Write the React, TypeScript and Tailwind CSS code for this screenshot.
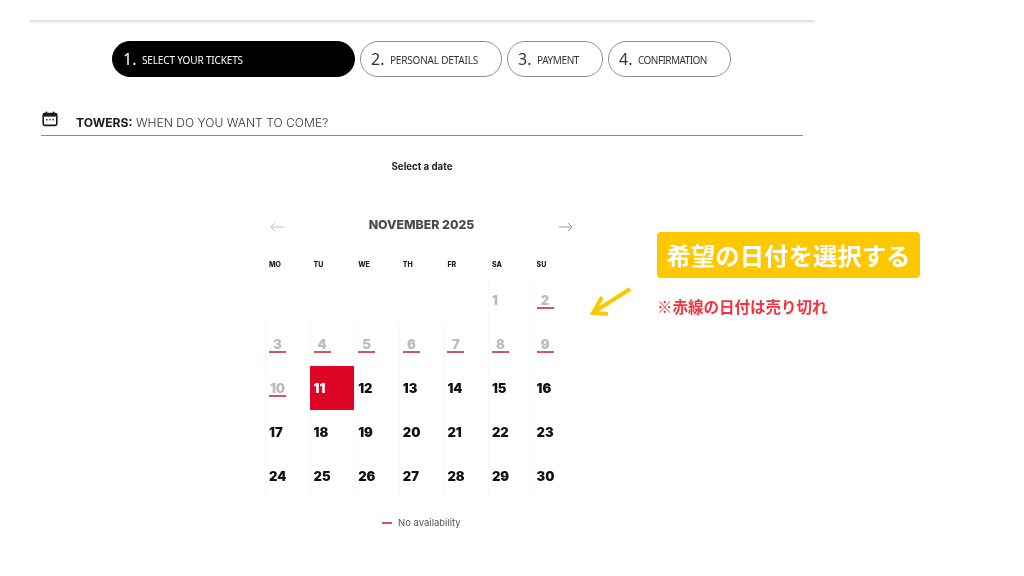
const steps = [
  { n: "1.", label: "SELECT YOUR TICKETS", w: "w-[243px]", t: "tracking-[-0.15px]", active: true },
  { n: "2.", label: "PERSONAL DETAILS", w: "w-[142px]", t: "tracking-[-0.2px]", active: false },
  { n: "3.", label: "PAYMENT", w: "w-[96px]", t: "tracking-[-0.4px]", active: false },
  { n: "4.", label: "CONFIRMATION", w: "w-[123px]", t: "tracking-[-0.55px]", active: false },
];
const days = ["MO", "TU", "WE", "TH", "FR", "SA", "SU"];
const sold = [2, 3, 4, 5, 6, 7, 8, 9, 10];

function Cell({ d }: { d: number | null }) {
  if (d === null) return <div className="h-[44px]" />;
  const selected = d === 11;
  const grey = d <= 10;
  const isSold = sold.includes(d);
  return (
    <div
      className={`relative h-[44px] border-l border-[#f8f8f8] ${selected ? "bg-[#df0527] text-white border-l-[#df0527]" : grey ? "text-[#bcbcbc]" : "text-[#111]"}`}
    >
      {isSold ? (
        <span className="absolute left-[3px] top-[14px] w-[17px] text-center text-[13px] leading-[17px] font-black">{d}</span>
      ) : (
        <span className="absolute left-[3px] top-[14px] text-[13px] leading-[17px] font-black">{d}</span>
      )}
      {isSold && <span className="absolute left-[3px] top-[29px] h-[2px] w-[17px] bg-[#d4565f]" />}
    </div>
  );
}

export default function App() {
  const cells: (number | null)[] = [null, null, null, null, null];
  for (let i = 1; i <= 30; i++) cells.push(i);
  return (
    <div className="h-[576px] w-[1024px] overflow-hidden bg-white font-['Inter',sans-serif] blur-[0.3px]">
      <div className="h-[20px]" />
      <div className="ml-[30px] h-[2px] w-[785px] bg-[#e2e2e2] shadow-[0_1px_2px_rgba(0,0,0,0.05)]" />
      <div className="ml-[112px] mt-[19px] flex gap-[5px] font-['Noto_Sans',sans-serif]">
        {steps.map((s) => (
          <div
            key={s.n}
            className={`flex h-[36px] items-center rounded-full border pl-[10px] ${s.w} ${s.active ? "border-black bg-black text-white" : "border-[#8e8e8e] bg-white text-[#333]"}`}
          >
            <span className="w-[19px] text-[16px] leading-none">{s.n}</span>
            <span className={`whitespace-nowrap pt-[1px] text-[10px] leading-none ${s.t}`}>{s.label}</span>
          </div>
        ))}
      </div>
      <div className="relative ml-[41px] mt-[34px] flex h-[25px] w-[762px] items-start border-b border-[#8a8a8a] pl-[35px]">
        <svg className="absolute left-[1px] top-[0px]" width="16" height="16" viewBox="0 0 16 16" fill="none">
          <rect x="1.2" y="2.6" width="13.6" height="11.8" rx="1.6" stroke="#1a1a1a" strokeWidth="1.6" />
          <rect x="1.2" y="2.6" width="13.6" height="3" fill="#1a1a1a" />
          <rect x="3.6" y="0.6" width="1.6" height="3" fill="#1a1a1a" />
          <rect x="10.8" y="0.6" width="1.6" height="3" fill="#1a1a1a" />
          <rect x="4" y="8" width="1.4" height="1.4" fill="#1a1a1a" />
          <rect x="7.2" y="8" width="1.4" height="1.4" fill="#1a1a1a" />
          <rect x="10.4" y="8" width="1.4" height="1.4" fill="#1a1a1a" />
        </svg>
        <p className="mt-[4px] whitespace-nowrap text-[12.1px] leading-[16px] font-light text-[#333]">
          <span className="font-bold text-[#1a1a1a]">TOWERS:</span> WHEN DO YOU WANT TO COME?
        </p>
      </div>
      <p className="mt-[24px] w-[844px] text-center text-[9.7px] leading-[14px] font-bold text-[#222]">Select a date</p>
      <div className="ml-[265px] mt-[43px] flex">
        <div className="w-[312px]">
          <div className="relative h-[16px] w-full">
            <p className="w-[312px] pl-[1px] text-center text-[12.3px] leading-[16px] font-extrabold text-[#4a4a4a]">NOVEMBER 2025</p>
            <svg className="absolute left-[5px] top-[5px]" width="15" height="10" viewBox="0 0 15 10" fill="none" stroke="#bcbcbc" strokeWidth="1">
              <path d="M14 5H1M5 1L1 5l4 4" />
            </svg>
            <svg className="absolute left-[293px] top-[5px]" width="15" height="10" viewBox="0 0 15 10" fill="none" stroke="#9a9a9a" strokeWidth="1">
              <path d="M1 5h13M10 1l4 4-4 4" />
            </svg>
          </div>
          <div className="mt-[25px] grid h-[20px] grid-cols-[repeat(7,44.6px)] items-start">
            {days.map((d) => (
              <span key={d} className="pl-[4px] text-[7px] leading-[14px] font-extrabold text-[#222]">{d}</span>
            ))}
          </div>
          <div className="grid grid-cols-[repeat(7,44.6px)]">
            {cells.map((d, i) => (
              <Cell key={i} d={d} />
            ))}
          </div>
          <div className="mt-[18px] flex items-center pl-[117px]">
            <span className="h-[2px] w-[10px] bg-[#d4565f]" />
            <span className="ml-[6px] text-[9.5px] leading-[14px] text-[#555]">No availability</span>
          </div>
        </div>
        <svg className="ml-[13px] mt-[69px] shrink-0" width="42" height="30" viewBox="0 0 42 30" fill="none" stroke="#fdc800" strokeWidth="4">
          <path d="M40 3L4 26M12 11L3 27l15 1" />
        </svg>
        <div className="ml-[25px] mt-[15px] font-['Noto_Sans_CJK_JP',sans-serif]">
          <div className="flex h-[46px] w-[263px] items-center justify-center rounded-[4px] bg-[#fdc800] text-[24.4px] leading-none font-semibold whitespace-nowrap text-white">
            希望の日付を選択する
          </div>
          <p className="mt-[18px] text-[15.5px] leading-[20px] font-bold text-[#f5333f]">※赤線の日付は売り切れ</p>
        </div>
      </div>
    </div>
  );
}
